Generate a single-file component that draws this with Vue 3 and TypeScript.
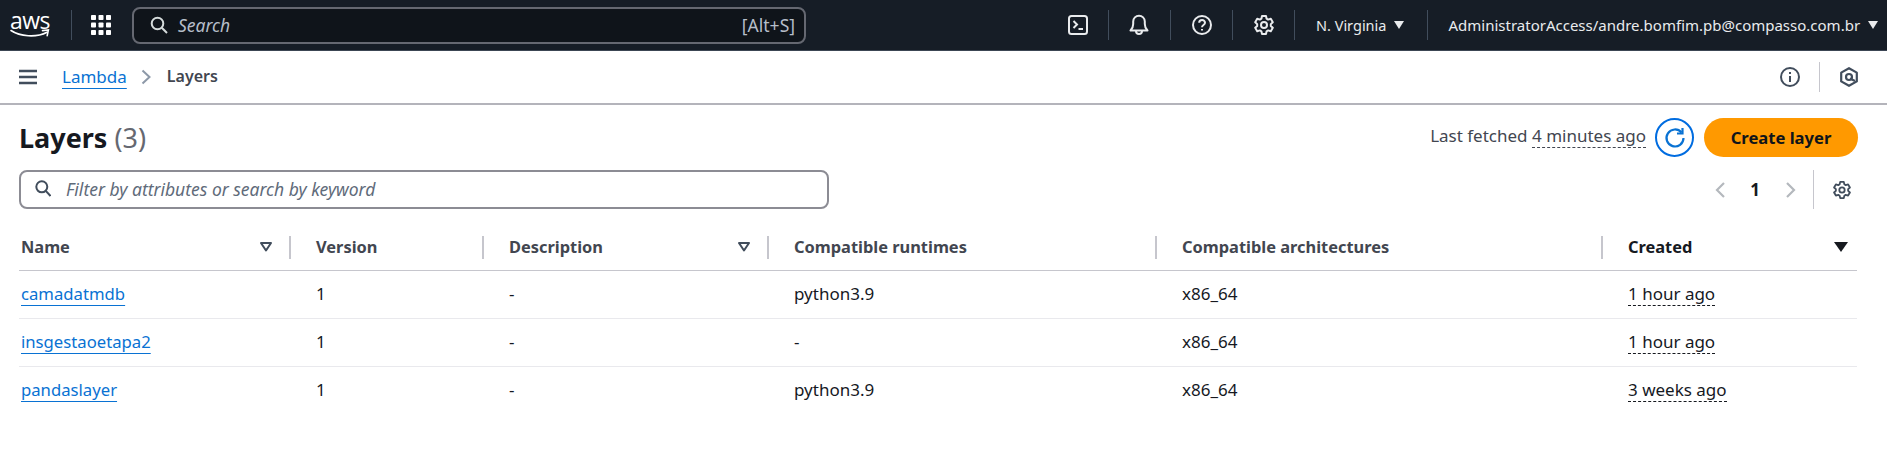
<script setup lang="ts">
interface Row { name: string; runtime: string; created: string }
const rows: Row[] = [
  { name: 'camadatmdb', runtime: 'python3.9', created: '1 hour ago' },
  { name: 'insgestaoetapa2', runtime: '-', created: '1 hour ago' },
  { name: 'pandaslayer', runtime: 'python3.9', created: '3 weeks ago' },
]
</script>

<template>
  <div class="page">
    <header class="top">
      <div class="logo">
        <span class="aws">aws</span>
        <svg class="smile" width="40" height="9" viewBox="0 0 40 9" fill="none" stroke="#fff" stroke-width="1.6" stroke-linecap="round"><path d="M1 1.500C10 7.500 26 9 37 3.200" /><path d="M32.500 1.600 38.400 1 37.200 6.600" /></svg>
      </div>
      <span class="tsep first"></span>
      <svg class="apps" width="20" height="20" viewBox="0 0 20 20" fill="#fff"><rect x="0" y="0" width="5" height="5" rx=".8"/><rect x="7.500" y="0" width="5" height="5" rx=".8"/><rect x="15" y="0" width="5" height="5" rx=".8"/><rect x="0" y="7.500" width="5" height="5" rx=".8"/><rect x="7.500" y="7.500" width="5" height="5" rx=".8"/><rect x="15" y="7.500" width="5" height="5" rx=".8"/><rect x="0" y="15" width="5" height="5" rx=".8"/><rect x="7.500" y="15" width="5" height="5" rx=".8"/><rect x="15" y="15" width="5" height="5" rx=".8"/></svg>
      <div class="tsearch">
        <svg width="18" height="18" viewBox="0 0 18 18" fill="none" stroke="#d5dbdb" stroke-width="2"><circle cx="7.500" cy="7.500" r="5.800"/><path d="M11.800 11.800 17 17"/></svg>
        <span class="ph">Search</span>
        <span class="kbd">[Alt+S]</span>
      </div>
      <svg class="ti term" width="20" height="20" viewBox="0 0 20 20" fill="none" stroke="#e9ebed" stroke-width="2"><rect x="1" y="1" width="18" height="18" rx="2.500"/><path d="M5.500 6 9 9.500 5.500 13M10.500 14H15"/></svg>
      <span class="tsep s1"></span>
      <svg class="ti bell" width="20" height="22" viewBox="0 0 20 22" fill="none" stroke="#e9ebed" stroke-width="2"><path d="M1.500 16.500h17c-2-2-2.700-3-2.700-6.500V7.500a5.800 5.800 0 0 0-11.600 0V10c0 3.500-.7 4.500-2.700 6.500Z" stroke-linejoin="round"/><path d="M7 17c0 4 6 4 6 0"/></svg>
      <span class="tsep s2"></span>
      <svg class="ti help" width="20" height="20" viewBox="0 0 20 20" fill="none" stroke="#e9ebed" stroke-width="2"><circle cx="10" cy="10" r="9"/><path d="M7.200 7.800c0-3.600 5.800-3.600 5.800 0 0 2.300-3 2.200-3 4.400"/><path d="M10 14v1.500"/></svg>
      <span class="tsep s3"></span>
      <svg class="ti gear" width="20" height="20" viewBox="0 0 20 20" fill="none" stroke="#e9ebed" stroke-width="2" stroke-linejoin="round"><path d="M8 1h4l.6 2.700 1.500.9 2.700-.8 2 3.400-2 1.900v1.800l2 1.900-2 3.400-2.700-.8-1.500.9L12 19H8l-.6-2.700-1.500-.9-2.700.8-2-3.400 2-1.900V9.100l-2-1.900 2-3.400 2.700.8 1.500-.9Z"/><circle cx="10" cy="10" r="3"/></svg>
      <span class="tsep s4"></span>
      <span class="region">N. Virginia</span><span class="caret c1"></span>
      <span class="tsep s5"></span>
      <span class="account">AdministratorAccess/andre.bomfim.pb@compasso.com.br</span><span class="caret c2"></span>
    </header>

    <nav class="sub">
      <svg class="burger" width="18" height="16" viewBox="0 0 18 16" fill="none" stroke="#414d5c" stroke-width="2.500"><path d="M0 2h18M0 8h18M0 14h18"/></svg>
      <a class="crumb">Lambda</a>
      <svg class="chev" width="10" height="16" viewBox="0 0 10 16" fill="none" stroke="#8d99a8" stroke-width="2"><path d="M1.500 1.500 8.500 8l-7 6.500"/></svg>
      <span class="here">Layers</span>
      <svg class="info" width="20" height="20" viewBox="0 0 20 20" fill="none" stroke="#414d5c" stroke-width="2"><circle cx="10" cy="10" r="9"/><path d="M10 9v6M10 5v2"/></svg>
      <span class="vsep"></span>
      <svg class="hex" width="18" height="20" viewBox="0 0 18 20" fill="none" stroke="#414d5c" stroke-width="2.200"><path d="M9 1.200 16.800 5.600v8.800L9 18.800 1.200 14.400V5.600Z" stroke-linejoin="round"/><circle cx="9" cy="10" r="3" /><path d="M10 11.500 15 14" /></svg>
    </nav>

    <main class="content">
      <div class="head">
        <h1>Layers <span>(3)</span></h1>
        <div class="fetched">Last fetched <span class="dash">4 minutes ago</span></div>
        <button class="refresh">
          <svg width="22" height="22" viewBox="0 0 22 22" fill="none" stroke="#0972d3" stroke-width="2.200"><path d="M17.500 5.500A8.500 8.500 0 1 0 19.500 11"/><path d="M18.500 1v5.500H13"/></svg>
        </button>
        <button class="create">Create layer</button>
      </div>

      <div class="tools">
        <div class="filter">
          <svg width="16" height="17" viewBox="0 0 16 17" fill="none" stroke="#414d5c" stroke-width="2"><circle cx="6.800" cy="6.800" r="5.500"/><path d="M10.800 10.800 15.500 16"/></svg>
          <span>Filter by attributes or search by keyword</span>
        </div>
        <div class="pager">
          <svg width="12" height="18" viewBox="0 0 12 18" fill="none" stroke="#b4b8bd" stroke-width="2.200"><path d="M10 2 3 9l7 7"/></svg>
          <b>1</b>
          <svg width="12" height="18" viewBox="0 0 12 18" fill="none" stroke="#b4b8bd" stroke-width="2.200"><path d="M2 2l7 7-7 7"/></svg>
          <span class="psep"></span>
          <svg class="pgear" width="18" height="18" viewBox="0 0 20 20" fill="none" stroke="#414d5c" stroke-width="2" stroke-linejoin="round"><path d="M8 1h4l.6 2.700 1.500.9 2.700-.8 2 3.400-2 1.900v1.800l2 1.900-2 3.400-2.700-.8-1.500.9L12 19H8l-.6-2.700-1.500-.9-2.700.8-2-3.400 2-1.900V9.100l-2-1.900 2-3.400 2.700.8 1.500-.9Z"/><circle cx="10" cy="10" r="3"/></svg>
        </div>
      </div>

      <div class="grid hdr">
        <div class="th f"><span>Name</span><svg width="12" height="10" viewBox="0 0 12 10" fill="none" stroke="#414d5c" stroke-width="2"><path d="M1 1h10L6 8.500Z" stroke-linejoin="round"/></svg></div>
        <div class="th"><span>Version</span></div>
        <div class="th"><span>Description</span><svg width="12" height="10" viewBox="0 0 12 10" fill="none" stroke="#414d5c" stroke-width="2"><path d="M1 1h10L6 8.500Z" stroke-linejoin="round"/></svg></div>
        <div class="th"><span>Compatible runtimes</span></div>
        <div class="th"><span>Compatible architectures</span></div>
        <div class="th sorted"><span>Created</span><svg class="sort" width="14" height="10" viewBox="0 0 14 10" fill="#16191f"><path d="M0 0h14L7 10Z"/></svg></div>
      </div>
      <div v-for="r in rows" :key="r.name" class="grid row">
        <div class="td f"><a>{{ r.name }}</a></div>
        <div class="td">1</div>
        <div class="td">-</div>
        <div class="td">{{ r.runtime }}</div>
        <div class="td">x86_64</div>
        <div class="td"><span class="dash dark">{{ r.created }}</span></div>
      </div>
    </main>
  </div>
</template>

<style>
html, body { margin: 0; background: #fff; }
</style>

<style scoped>
.page { width: 1887px; height: 466px; overflow: hidden; font-family: "Noto Sans", "Open Sans", sans-serif; font-size: 17px; color: #16191f; background: #fff; }
.top { height: 50px; background: #161d26; border-bottom: 1px solid #3c4654; box-sizing: content-box; display: flex; align-items: center; color: #e9ebed; }
.logo { margin-left: 10px; width: 40px; height: 30px; position: relative; flex: none; }
.aws { display: block; font-family: "Open Sans", sans-serif; font-size: 23px; line-height: 20px; color: #fff; text-align: center; letter-spacing: -0.5px; }
.smile { position: absolute; left: 0; top: 19px; }
.tsep { width: 1px; height: 30px; background: #414d5c; flex: none; }
.first { margin-left: 21px; }
.apps { margin-left: 19px; flex: none; }
.tsearch { margin-left: 21px; width: 674px; height: 37px; box-sizing: border-box; flex: none; background: #0f141a; border: 2px solid #656871; border-radius: 8px; display: flex; align-items: center; padding: 0 9px 0 16px; gap: 10px; color: #b6bec9; font-size: 17.5px; }
.ph { font-style: italic; }
.kbd { margin-left: auto; }
.ti { flex: none; }
.term { margin-left: 262px; }
.s1 { margin-left: 20px; }
.bell { margin-left: 20px; }
.s2 { margin-left: 21px; }
.help { margin-left: 21px; }
.s3 { margin-left: 20px; }
.gear { margin-left: 21px; }
.s4 { margin-left: 20px; }
.region { margin-left: 21px; font-size: 14.5px; white-space: nowrap; }
.caret { width: 0; height: 0; border-left: 5px solid transparent; border-right: 5px solid transparent; border-top: 8px solid #e9ebed; flex: none; }
.c1 { margin-left: 8px; }
.s5 { margin-left: 23px; }
.account { margin-left: 20px; font-size: 15px; white-space: nowrap; }
.c2 { margin-left: 8px; }
.sub { height: 52px; border-bottom: 2px solid #b4b4bb; display: flex; align-items: center; padding-left: 19px; box-sizing: content-box; }
.burger { flex: none; }
.crumb { margin-left: 25px; padding-bottom: 2px; color: #0972d3; text-decoration: underline; text-underline-offset: 5px; }
.chev { margin-left: 14px; }
.here { margin-left: 16px; padding-bottom: 2px; color: #424650; font-weight: 600; font-size: 16px; }
.info { margin-left: auto; }
.vsep { width: 1px; height: 30px; background: #c6c6cd; margin-left: 19px; }
.hex { margin: 0 29px 0 20px; }
.content { padding: 0 29px 0 19px; }
.head { height: 65px; display: flex; align-items: center; }
h1 { margin: 0 auto 0 0; font-size: 27px; font-weight: 700; line-height: 36px; color: #16191f; }
h1 span { font-weight: 400; color: #656871; }
.fetched { color: #424650; margin-bottom: 4px; }
.dash { border-bottom: 1px dashed #424650; }
.dark { border-color: #16191f; padding-bottom: 0; }
button { font: inherit; box-sizing: border-box; cursor: pointer; }
.refresh { width: 39px; height: 39px; margin-left: 9px; border: 2px solid #006ce0; border-radius: 50%; background: #fff; padding: 0; display: flex; align-items: center; justify-content: center; }
.create { width: 154px; height: 39px; margin-left: 10px; border: none; border-radius: 20px; background: #ff9900; font-weight: 700; font-size: 16.6px; color: #0f141a; }
.tools { display: flex; justify-content: space-between; align-items: center; height: 39px; }
.filter { width: 810px; height: 39px; box-sizing: border-box; border: 2px solid #8c8c94; border-radius: 8px; display: flex; align-items: center; gap: 15px; padding: 0 0 2px 14px; color: #5f6b7a; font-style: italic; font-size: 17.5px; }
.pager { display: flex; align-items: center; height: 39px; margin-right: 7px; }
.pager b { margin: 0 25px 0 24px; font-weight: 700; }
.psep { width: 1px; height: 39px; background: #c6c6cd; margin-left: 16px; }
.pgear { margin-left: 19px; }
.grid { display: grid; grid-template-columns: 272px 193px 285px 388px 446px 254px; width: 1838px; }
.hdr { margin-top: 19px; height: 42px; border-bottom: 1px solid #c6c6cd; box-sizing: content-box; align-items: start; padding-top: 0; }
.th { height: 23px; margin-top: 8px; box-sizing: border-box; display: flex; align-items: center; justify-content: space-between; padding: 0 17px 2px 25px; border-right: 2px solid #c6c6cd; font-weight: 700; font-size: 16.4px; color: #424650; }
.th:last-child { border-right: none; padding-right: 9px; }
.th.f { padding-left: 2px; }
.sorted { color: #16191f; }
.row { height: 47px; border-bottom: 1px solid #e9e9ed; align-items: center; }
.row:last-child { border-bottom: none; }
.td { padding: 0 0 2px 25px; color: #16191f; }
.td.f { padding-left: 2px; font-size: 16.7px; }
.td a { color: #0972d3; text-decoration: underline; text-underline-offset: 5px; }
</style>
